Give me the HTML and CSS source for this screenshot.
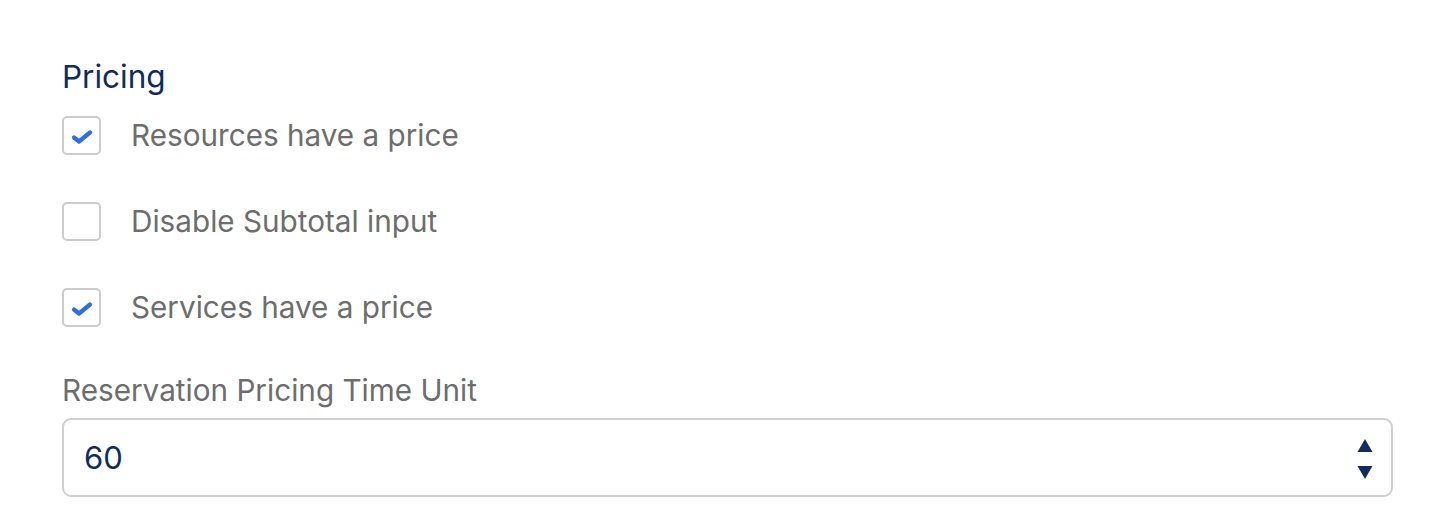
FILE: index.html
```html
<!DOCTYPE html>
<html lang="en">
<head>
<meta charset="utf-8">
<title>Pricing</title>
<link rel="stylesheet" href="styles.css">
</head>
<body>
<section class="panel">
  <h2 class="title">Pricing</h2>
  <div class="checks">
    <label class="check-row">
      <span class="box checked">
        <svg width="22" height="14" viewBox="0 0 22 14"><path d="M3 7.5 L8 11.5 L19 2.5" fill="none" stroke="#2f6fd6" stroke-width="4.2" stroke-linecap="round" stroke-linejoin="round"/></svg>
      </span>
      <span class="check-label">Resources have a price</span>
    </label>
    <label class="check-row">
      <span class="box"></span>
      <span class="check-label">Disable Subtotal input</span>
    </label>
    <label class="check-row">
      <span class="box checked">
        <svg width="22" height="14" viewBox="0 0 22 14"><path d="M3 7.5 L8 11.5 L19 2.5" fill="none" stroke="#2f6fd6" stroke-width="4.2" stroke-linecap="round" stroke-linejoin="round"/></svg>
      </span>
      <span class="check-label">Services have a price</span>
    </label>
  </div>
  <div class="field">
    <div class="field-label">Reservation Pricing Time Unit</div>
    <div class="select">
      <span class="select-value">60</span>
      <svg class="arrows" width="16" height="40" viewBox="0 0 16 40"><polygon points="8,0 15.5,13 0.5,13" fill="#112b5c"/><polygon points="0.5,27 15.5,27 8,40" fill="#112b5c"/></svg>
    </div>
  </div>
</section>
</body>
</html>
```

FILE: styles.css
```css
* { box-sizing: border-box; }
html, body { margin: 0; padding: 0; background: #ffffff; }
body {
  font-family: Inter, "Liberation Sans", Arial, sans-serif;
}
.panel {
  padding: 57px 45px 0 62px;
}
.title {
  margin: 0;
  font-size: 31.5px;
  line-height: 40px;
  font-weight: 400;
  color: #112b5c;
}
.checks {
  margin-top: 19px;
  display: flex;
  flex-direction: column;
  gap: 47px;
}
.check-row {
  display: flex;
  align-items: center;
  height: 39px;
}
.box {
  width: 39px;
  height: 39px;
  border: 2px solid #cccccc;
  border-radius: 5px;
  display: flex;
  align-items: center;
  justify-content: center;
  flex: none;
}
.box svg { margin-top: 3px; }
.check-label {
  margin-left: 30px;
  font-size: 29.7px;
  line-height: 39px;
  color: #6d6d6d;
}
.field {
  margin-top: 43px;
}
.field-label {
  font-size: 29.7px;
  line-height: 40px;
  color: #6d6d6d;
}
.select {
  margin-top: 8px;
  height: 79px;
  border: 2px solid #cfcfcf;
  border-radius: 9px;
  display: flex;
  align-items: center;
  justify-content: space-between;
  padding: 0 18px 0 20px;
}
.select-value {
  font-size: 31px;
  color: #112b5c;
}
.arrows { margin-top: 2px; }
```
